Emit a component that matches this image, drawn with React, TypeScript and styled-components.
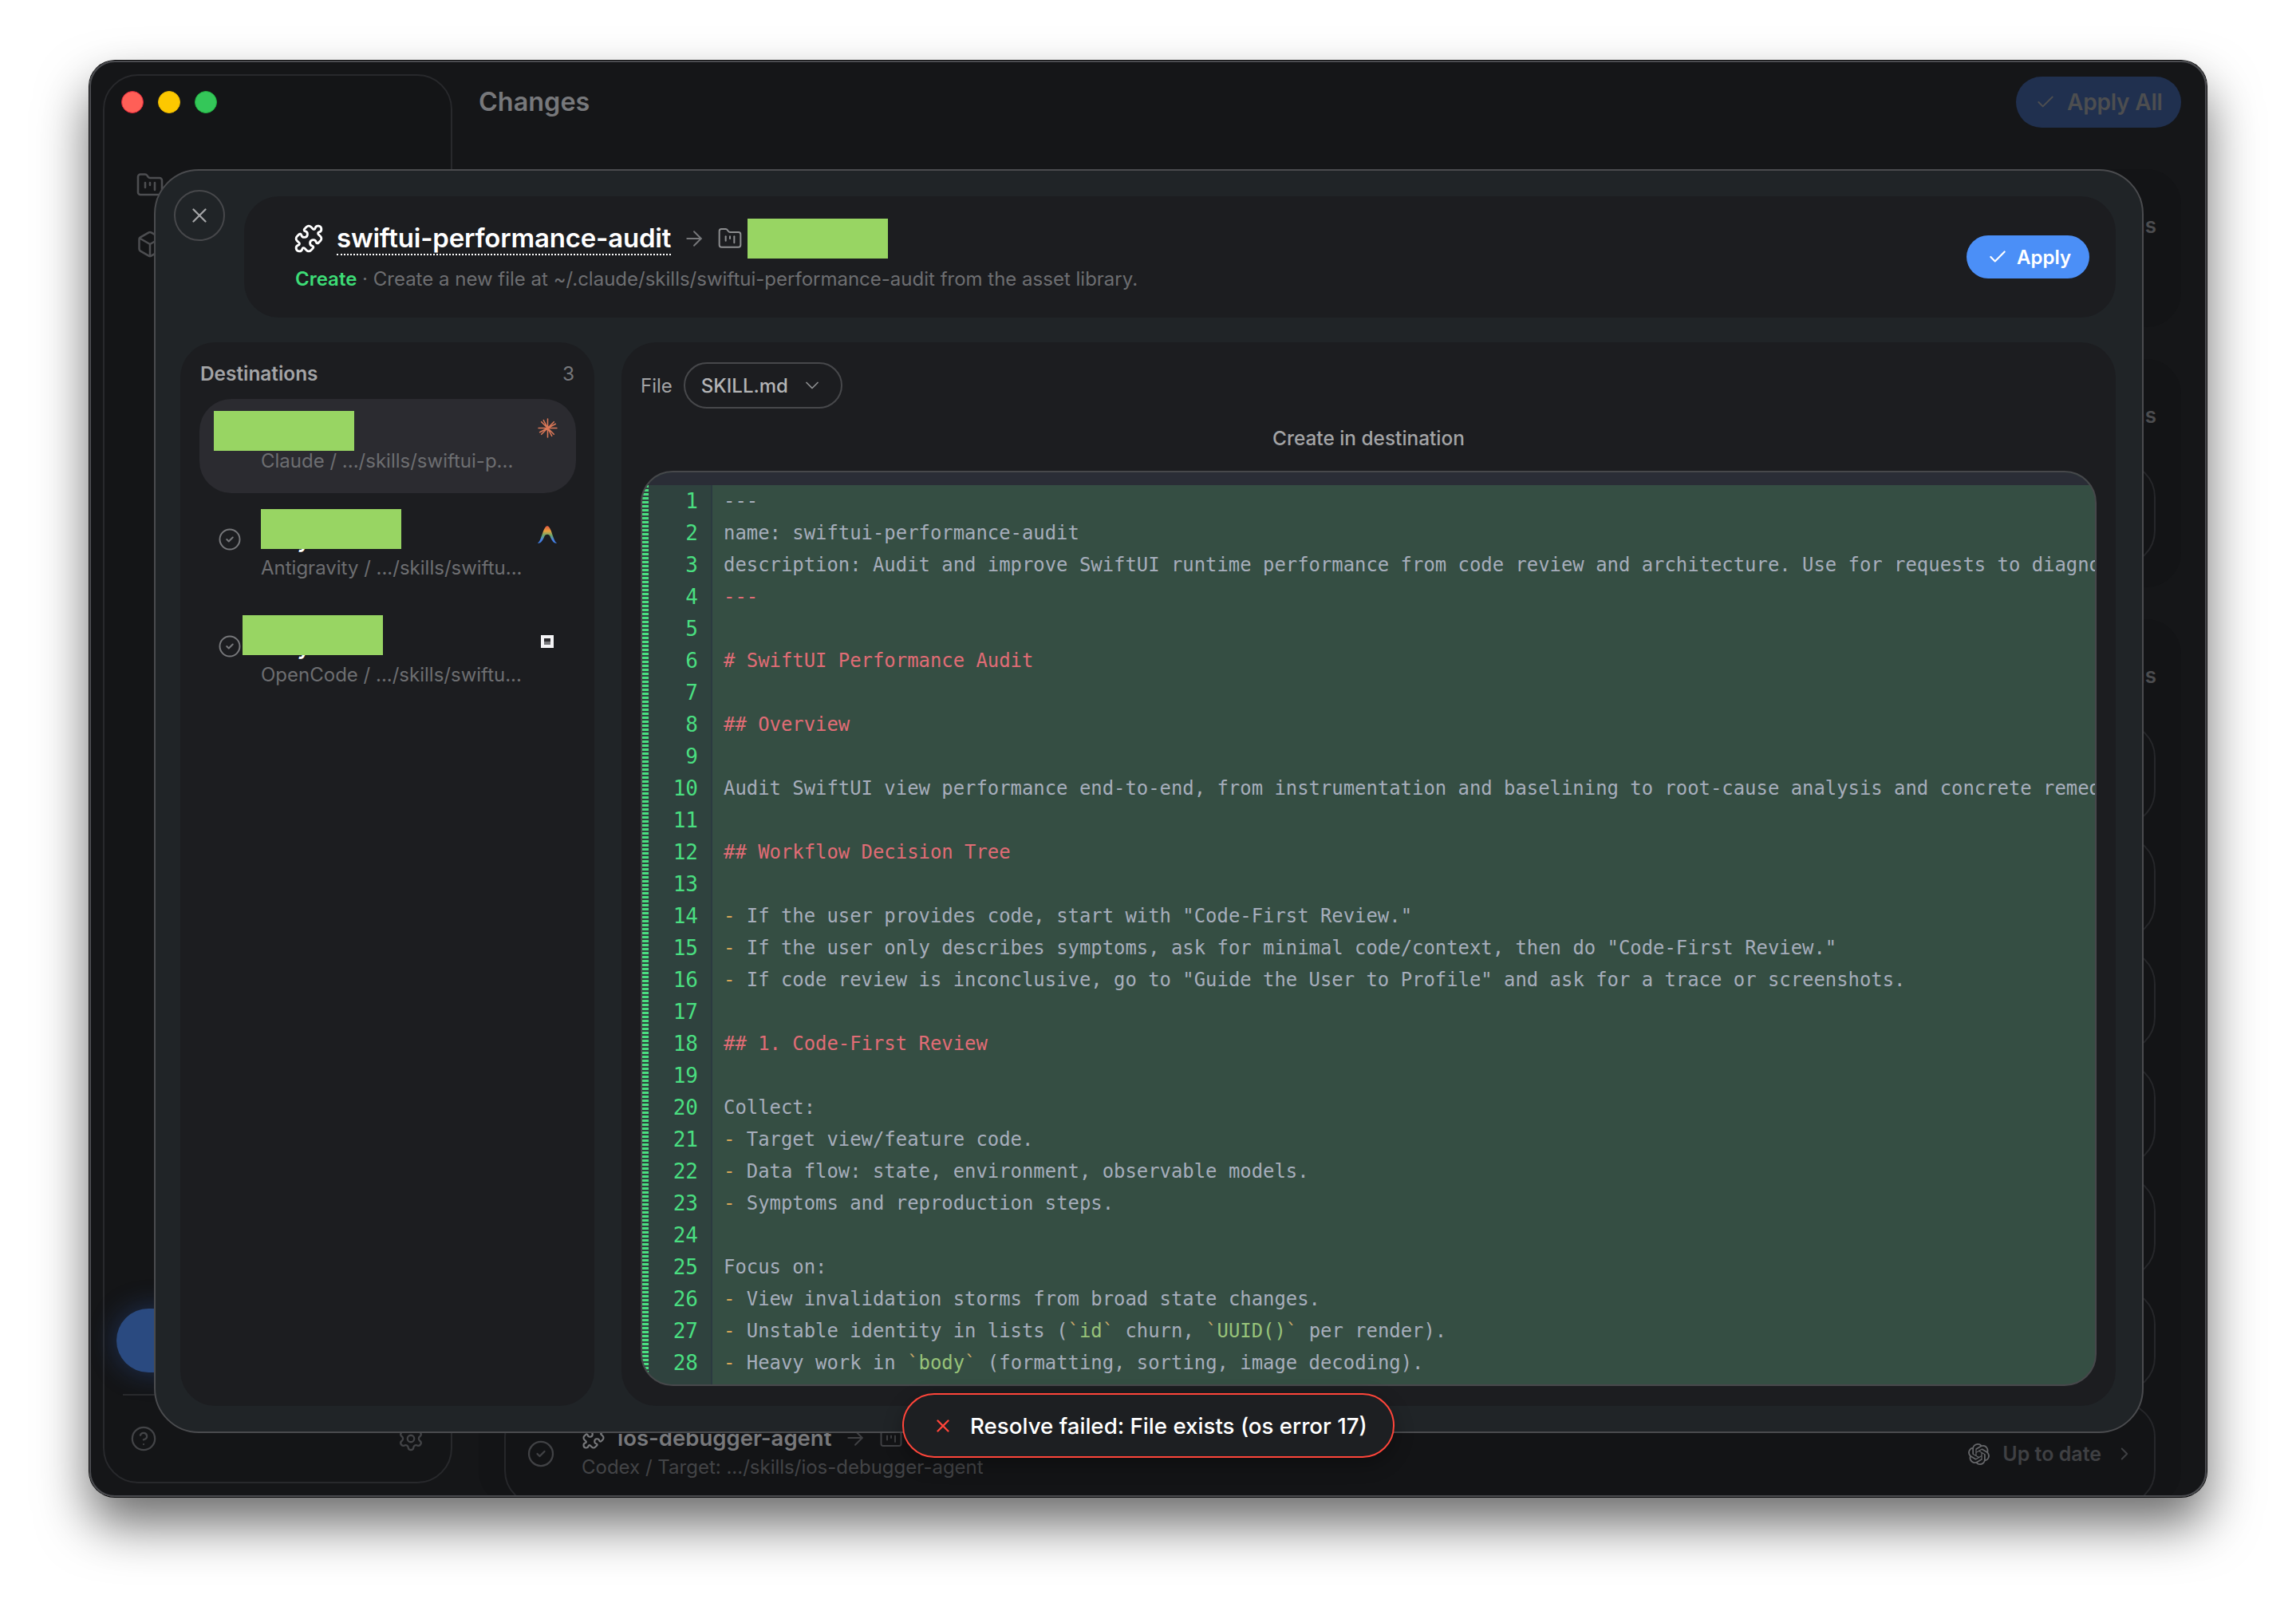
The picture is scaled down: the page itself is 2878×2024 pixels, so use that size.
import { FC, ReactNode } from 'react';
import styled, { createGlobalStyle } from 'styled-components';
import {
	ArrowRight,
	Box,
	Check,
	ChevronDown,
	ChevronRight,
	CircleCheck,
	CircleHelp,
	FolderKanban,
	Puzzle,
	Settings,
	X,
} from 'lucide-react';
import { SiOpenai } from 'react-icons/si';

const GlobalStyle = createGlobalStyle`
	html, body {
		margin: 0;
		background: #fff;
	}
	body {
		font-family: Inter, 'Liberation Sans', sans-serif;
	}
	* {
		box-sizing: border-box;
	}
`;

const Page = styled.div`
	width: 2878px;
	height: 2024px;
	padding: 76px 112px 148px;
`;

const Window = styled.div`
	position: relative;
	display: grid;
	grid-template-columns: 438px 2134px;
	column-gap: 33px;
	width: 2654px;
	height: 1800px;
	padding: 17px;
	overflow: hidden;
	border-radius: 32px;
	background: #151618;
`;

const WindowFrame = styled.div`
	width: 2654px;
	height: 1800px;
	border-radius: 32px;
	box-shadow:
		0 0 0 1px #0a0a0b,
		0 34px 64px rgba(0, 0, 0, 0.58);
`;

const WindowEdge = styled.div`
	position: absolute;
	inset: 0;
	border: 2px solid #4b4c50;
	border-radius: 32px;
	pointer-events: none;
`;

const Sidebar = styled.aside`
	display: flex;
	flex-direction: column;
	height: 1766px;
	padding: 19px 15px 0;
	border: 2px solid #28292c;
	border-radius: 44px;
	background: #141517;
`;

const Lights = styled.div`
	display: flex;
	gap: 18px;
	padding-left: 6px;
`;

const Light = styled.span<{ $color: string; $edge: string }>`
	width: 28px;
	height: 28px;
	border-radius: 50%;
	background: ${(props) => props.$color};
	border: 1px solid ${(props) => props.$edge};
`;

const Nav = styled.nav`
	display: flex;
	flex-direction: column;
	gap: 38px;
	margin-top: 72px;
	padding-left: 24px;
	color: #4d4e51;
`;

const BlueButton = styled.div`
	height: 80px;
	margin-top: auto;
	border-radius: 40px;
	background: #2a4a80;
	box-shadow: 0 0 34px rgba(52, 104, 206, 0.34);
`;

const SideDivider = styled.div`
	height: 2px;
	margin: 27px 0 0 8px;
	background: #28292c;
`;

const SideFooter = styled.div`
	display: flex;
	align-items: center;
	justify-content: space-between;
	height: 108px;
	padding: 0 18px 0 17px;
	color: #434447;
`;

const Main = styled.main`
	display: flex;
	flex-direction: column;
`;

const TopBar = styled.header`
	display: flex;
	align-items: center;
	justify-content: space-between;
	height: 64px;
	margin: 3px 0 52px;
`;

const PageTitle = styled.h1`
	margin: 0 0 2px;
	font-size: 32.400px;
	font-weight: 600;
	color: #77787b;
`;

const ApplyAll = styled.div`
	display: flex;
	align-items: center;
	gap: 14px;
	width: 207px;
	height: 64px;
	padding-left: 24px;
	border-radius: 32px;
	background: #20304f;
	color: #4d4e50;
	font-size: 28px;
	letter-spacing: -0.2px;
	font-weight: 600;
`;

const Sections = styled.div`
	display: flex;
	flex-direction: column;
	gap: 40px;
`;

const Section = styled.section<{ $height?: number }>`
	display: flex;
	flex-direction: column;
	gap: 12px;
	flex: none;
	height: ${(props) => (props.$height ? `${props.$height}px` : 'auto')};
	padding: 56px 32px 0;
	border-radius: 44px;
	background: #131416;
`;

const SectionCount = styled.div`
	height: 30px;
	margin: 0 -1px 31px 0;
	text-align: right;
	font-size: 26px;
	line-height: 30px;
	font-weight: 600;
	color: #4b4c4f;
`;

const AssetRow = styled.div`
	display: flex;
	align-items: center;
	flex: none;
	height: 130px;
	padding: 0 22px 0 26px;
	border: 2px solid #26272a;
	border-radius: 44px;
`;

const AssetCheck = styled.span`
	display: flex;
	margin-right: 33px;
	color: #414245;
`;

const AssetBody = styled.div`
	display: flex;
	flex-direction: column;
	gap: 4px;
	flex: 1;
	margin-top: -4px;
`;

const AssetTitle = styled.div`
	display: flex;
	align-items: center;
	gap: 15px;
	font-size: 27.500px;
	line-height: 34px;
	font-weight: 600;
	color: #77787b;
`;

const AssetArrow = styled.span`
	display: flex;
	color: #404144;
`;

const AssetPath = styled.div`
	font-size: 24px;
	line-height: 32px;
	color: #434447;
`;

const AssetStatus = styled.div`
	display: flex;
	align-items: center;
	gap: 16px;
	margin-right: 2px;
	font-size: 25px;
	font-weight: 600;
	color: #3f4043;
`;

const StatusLogo = styled.span`
	display: flex;
	color: #66676a;
`;

const Modal = styled.div`
	position: absolute;
	top: 136px;
	left: 81px;
	display: flex;
	flex-direction: column;
	gap: 31px;
	width: 2494px;
	height: 1584px;
	padding: 32px 33px 32px 31px;
	border: 2px solid #4a4b4e;
	border-radius: 56px;
	background: #202427;
`;

const CloseButton = styled.button`
	position: absolute;
	top: 24px;
	left: 23px;
	display: flex;
	align-items: center;
	justify-content: center;
	width: 64px;
	height: 64px;
	padding: 0;
	border: 2px solid #47484b;
	border-radius: 50%;
	background: transparent;
	color: #a5a6a8;
`;

const ModalHeader = styled.header`
	display: flex;
	align-items: center;
	justify-content: space-between;
	flex: none;
	height: 152px;
	margin-left: 80px;
	padding: 0 33px 0 64px;
	border-radius: 44px;
	background: #1c1d20;
`;

const HeaderText = styled.div`
	display: flex;
	flex-direction: column;
	gap: 10px;
	margin-top: -4px;
`;

const HeaderTitle = styled.div`
	display: flex;
	align-items: center;
	height: 50px;
	color: #a0a1a3;
`;

const HeaderIcon = styled.span`
	display: flex;
	margin: 0 16px 0 -2px;
	color: #fff;
`;

const SkillName = styled.span`
	border-bottom: 2px dotted #fff;
	font-size: 33px;
	letter-spacing: -0.2px;
	line-height: 40px;
	font-weight: 600;
	color: #fff;
`;

const HeaderArrow = styled.span`
	display: flex;
	margin: 0 14px;
	color: #77787b;
`;

const Redacted = styled.span`
	display: block;
	width: 176px;
	height: 50px;
	background: #98d563;
`;

const HeaderFolder = styled.span`
	display: flex;
	margin-right: 6px;
	color: #8d8e90;
`;

const HeaderSub = styled.div`
	font-size: 24px;
	line-height: 32px;
	color: #6d6e71;
`;

const Verb = styled.span`
	font-weight: 600;
	color: #3ddc76;
`;

const ApplyButton = styled.button`
	display: flex;
	align-items: center;
	gap: 11px;
	width: 154px;
	height: 54px;
	padding: 0 0 0 26px;
	border: 0;
	border-radius: 27px;
	background: #4b8ff7;
	color: #fff;
	font-family: inherit;
	font-size: 24px;
	font-weight: 600;
`;

const ModalBody = styled.div`
	display: grid;
	grid-template-columns: 519px 1fr;
	column-gap: 34px;
	flex: 1;
	min-height: 0;
`;

const Panel = styled.div`
	display: flex;
	flex-direction: column;
	min-width: 0;
	border-radius: 44px;
	background: #1c1d20;
`;

const DestHeader = styled.div`
	display: flex;
	align-items: center;
	justify-content: space-between;
	height: 71px;
	padding: 6px 25px 0;
	font-size: 24.400px;
	font-weight: 600;
	color: #a3a4a6;
`;

const DestCount = styled.span`
	font-weight: 400;
	color: #77787b;
`;

const DestList = styled.div`
	display: flex;
	flex-direction: column;
	gap: 16px;
	padding: 0 23px 0 24px;
`;

const DestRow = styled.div<{ $active?: boolean }>`
	display: flex;
	height: 118px;
	padding: 0 22px 0 23px;
	border-radius: 40px;
	background: ${(props) => (props.$active ? '#2b2b30' : 'transparent')};
`;

const DestCheck = styled.span`
	display: flex;
	margin: 27px 24px 0 0;
	color: #77787b;
`;

const DestText = styled.div`
	position: relative;
	flex: 1;
	min-width: 0;
	padding-top: 26px;
`;

const DestName = styled.div`
	font-size: 27px;
	line-height: 34px;
	font-weight: 600;
	color: #fff;
`;

const DestPath = styled.div`
	margin-top: 2px;
	font-size: 24px;
	line-height: 32px;
	color: #6d6e71;
`;

const DestRedaction = styled(Redacted)<{ $left: number; $top: number }>`
	position: absolute;
	top: ${(props) => props.$top}px;
	left: ${(props) => props.$left}px;
`;

const DestLogo = styled.span`
	display: flex;
	align-items: center;
	justify-content: center;
	width: 28px;
	height: 28px;
	margin-top: 22px;
`;

const FileBar = styled.div`
	display: flex;
	align-items: center;
	gap: 14px;
	height: 58px;
	margin: 25px 24px 0;
	font-size: 24px;
	color: #a3a4a6;
`;

const FileSelect = styled.div`
	display: flex;
	align-items: center;
	width: 199px;
	height: 58px;
	padding-left: 20px;
	gap: 16px;
	border: 2px solid #47484b;
	border-radius: 29px;
	color: #b4b5b7;
	font-weight: 500;
`;

const DiffTitle = styled.div`
	height: 78px;
	text-align: center;
	font-size: 24.400px;
	font-weight: 500;
	line-height: 74px;
	color: #a3a4a6;
`;

const CodeBlock = styled.div`
	display: flex;
	flex-direction: column;
	flex: none;
	width: 1825px;
	height: 1147px;
	margin-left: 24px;
	overflow: hidden;
	border: 2px solid #47484b;
	border-radius: 40px;
	background: #354e43;
`;

const CodeTopBand = styled.div`
	flex: none;
	height: 16px;
	background: #2a2d36;
`;

const CodeBody = styled.div`
	display: flex;
	flex: 1;
	min-height: 0;
	font-family: 'DejaVu Sans Mono', 'Liberation Mono', monospace;
	font-size: 23.900px;
	line-height: 40px;
`;

const AddedStrip = styled.div`
	flex: none;
	width: 8px;
	background: repeating-linear-gradient(to bottom, #4ade80 0 3px, #2f423e 3px 5px);
`;

const Gutter = styled.div`
	flex: none;
	width: 80px;
	padding-right: 16px;
	border-right: 2px solid #2b3a40;
	background: #2f423e;
	text-align: right;
	font-size: 26px;
	color: #4ade80;
`;

const CodeLines = styled.div`
	flex: 1;
	min-width: 0;
	padding-left: 14px;
	overflow: hidden;
	white-space: pre;
	color: #a6adbb;
`;

const Line = styled.div`
	height: 40px;
`;

const Heading = styled.span`
	color: #e06c75;
`;

const Bullet = styled.span`
	color: #d8a657;
`;

const InlineCode = styled.span`
	color: #98c379;
`;

const Tick = styled.span`
	color: #c8a869;
`;

const Toast = styled.div`
	position: absolute;
	bottom: 49px;
	left: 1019px;
	display: flex;
	align-items: center;
	gap: 21px;
	width: 617px;
	height: 81px;
	padding-left: 36px;
	border: 2px solid #ff453a;
	border-radius: 40px;
	background: #1d1f22;
	box-shadow: 0 8px 24px rgba(0, 0, 0, 0.3);
	color: #fff;
	font-size: 27.700px;
	font-weight: 500;
`;

const ToastIcon = styled.span`
	display: flex;
	color: #ff453a;
`;

const ClaudeMark: FC = () => (
	<svg width="25" height="25" viewBox="0 0 24 24" fill="none" stroke="#d97757" strokeWidth="1.5" strokeLinecap="round">
		<path d="M12 12 12 1M12 12 12 23M12 12 1 12M12 12 23 12M12 12 4.500 4.500M12 12 19.500 19.500M12 12 19.500 4.500M12 12 4.500 19.500M12 12 7 2.500M12 12 17 21.500M12 12 2.500 17M12 12 21.500 7" />
	</svg>
);

const AntigravityMark: FC = () => (
	<svg width="26" height="24" viewBox="0 0 26 24">
		<defs>
			<linearGradient id="antigravity" x1="0" y1="0" x2="0" y2="1">
				<stop offset="0" stopColor="#e2533f" />
				<stop offset="0.3" stopColor="#e8a13f" />
				<stop offset="0.55" stopColor="#6aa86a" />
				<stop offset="0.8" stopColor="#4a82e6" />
				<stop offset="1" stopColor="#3d7be0" />
			</linearGradient>
		</defs>
		<path
			d="M1 22.500C6 20 7.500 2 13 1C18.500 2 20 20 25 22.500C21.500 24 18.500 19 16.500 14C15 11 11 11 9.500 14C7.500 19 4.500 24 1 22.500Z"
			fill="url(#antigravity)"
		/>
	</svg>
);

const OpenCodeBox = styled.span`
	display: flex;
	flex-direction: column;
	width: 16px;
	height: 16px;
	padding: 4px;
	background: #f4f4f6;
`;

const OpenCodeTop = styled.span`
	flex: 1;
	background: #2b2b2e;
`;

const OpenCodeBottom = styled.span`
	flex: 1;
	background: #77787b;
`;

const OpenCodeMark: FC = () => (
	<OpenCodeBox>
		<OpenCodeTop />
		<OpenCodeBottom />
	</OpenCodeBox>
);

interface IDestination {
	path: string;
	logo: ReactNode;
	redactLeft: number;
	redactTop: number;
	active?: boolean;
}

const destinations: IDestination[] = [
	{ path: 'Claude / .../skills/swiftui-p...', logo: <ClaudeMark />, redactLeft: -59, redactTop: 15, active: true },
	{ path: 'Antigravity / .../skills/swiftu...', logo: <AntigravityMark />, redactLeft: 0, redactTop: 4 },
	{ path: 'OpenCode / .../skills/swiftu...', logo: <OpenCodeMark />, redactLeft: -23, redactTop: 3 },
];

const code: ReactNode[] = [
	'---',
	'name: swiftui-performance-audit',
	'description: Audit and improve SwiftUI runtime performance from code review and architecture. Use for requests to diagnose slow rendering.',
	<Heading>---</Heading>,
	'',
	<Heading># SwiftUI Performance Audit</Heading>,
	'',
	<Heading>## Overview</Heading>,
	'',
	'Audit SwiftUI view performance end-to-end, from instrumentation and baselining to root-cause analysis and concrete remediation steps.',
	'',
	<Heading>## Workflow Decision Tree</Heading>,
	'',
	<><Bullet>-</Bullet> If the user provides code, start with "Code-First Review."</>,
	<><Bullet>-</Bullet> If the user only describes symptoms, ask for minimal code/context, then do "Code-First Review."</>,
	<><Bullet>-</Bullet> If code review is inconclusive, go to "Guide the User to Profile" and ask for a trace or screenshots.</>,
	'',
	<Heading>## 1. Code-First Review</Heading>,
	'',
	'Collect:',
	<><Bullet>-</Bullet> Target view/feature code.</>,
	<><Bullet>-</Bullet> Data flow: state, environment, observable models.</>,
	<><Bullet>-</Bullet> Symptoms and reproduction steps.</>,
	'',
	'Focus on:',
	<><Bullet>-</Bullet> View invalidation storms from broad state changes.</>,
	<><Bullet>-</Bullet> Unstable identity in lists (<Tick>`</Tick><InlineCode>id</InlineCode><Tick>`</Tick> churn, <Tick>`</Tick><InlineCode>UUID()</InlineCode><Tick>`</Tick> per render).</>,
	<><Bullet>-</Bullet> Heavy work in <Tick>`</Tick><InlineCode>body</InlineCode><Tick>`</Tick> (formatting, sorting, image decoding).</>,
];

const App: FC = () => (
	<Page>
		<GlobalStyle />
		<WindowFrame>
			<Window>
				<Sidebar>
					<Lights>
						<Light $color="#ff5f57" $edge="#e0263a" />
						<Light $color="#fdc800" $edge="#e6b400" />
						<Light $color="#34c759" $edge="#1fae3f" />
					</Lights>
					<Nav>
						<FolderKanban size={36} strokeWidth={1.7} />
						<Box size={36} strokeWidth={1.7} />
					</Nav>
					<BlueButton />
					<SideDivider />
					<SideFooter>
						<CircleHelp size={34} strokeWidth={1.6} />
						<Settings size={34} strokeWidth={1.6} />
					</SideFooter>
				</Sidebar>

				<Main>
					<TopBar>
						<PageTitle>Changes</PageTitle>
						<ApplyAll>
							<Check size={26} strokeWidth={1.8} />
							Apply All
						</ApplyAll>
					</TopBar>
					<Sections>
						<Section $height={198}>
							<SectionCount>4 destinations</SectionCount>
						</Section>
						<Section $height={286}>
							<SectionCount>2 destinations</SectionCount>
							<AssetRow />
						</Section>
						<Section>
							<SectionCount>7 destinations</SectionCount>
							{[0, 1, 2, 3, 4, 5].map((row) => (
								<AssetRow key={row} />
							))}
							<AssetRow>
								<AssetCheck>
									<CircleCheck size={36} strokeWidth={1.5} />
								</AssetCheck>
								<AssetBody>
									<AssetTitle>
										<Puzzle size={30} strokeWidth={1.7} />
										ios-debugger-agent
										<AssetArrow>
											<ArrowRight size={30} strokeWidth={1.5} />
										</AssetArrow>
										<FolderKanban size={30} strokeWidth={1.5} color="#404144" />
									</AssetTitle>
									<AssetPath>Codex / Target: .../skills/ios-debugger-agent</AssetPath>
								</AssetBody>
								<AssetStatus>
									<StatusLogo>
										<SiOpenai size={27} />
									</StatusLogo>
									Up to date
									<ChevronRight size={26} strokeWidth={1.8} />
								</AssetStatus>
							</AssetRow>
						</Section>
					</Sections>
				</Main>

				<Modal>
					<CloseButton>
						<X size={30} strokeWidth={1.8} />
					</CloseButton>
					<ModalHeader>
						<HeaderText>
							<HeaderTitle>
								<HeaderIcon>
									<Puzzle size={38} strokeWidth={1.8} />
								</HeaderIcon>
								<SkillName>swiftui-performance-audit</SkillName>
								<HeaderArrow>
									<ArrowRight size={30} strokeWidth={1.5} />
								</HeaderArrow>
								<HeaderFolder>
									<FolderKanban size={32} strokeWidth={1.5} />
								</HeaderFolder>
								<Redacted />
							</HeaderTitle>
							<HeaderSub>
								<Verb>Create</Verb> · Create a new file at ~/.claude/skills/swiftui-performance-audit from the asset library.
							</HeaderSub>
						</HeaderText>
						<ApplyButton>
							<Check size={26} strokeWidth={2} />
							Apply
						</ApplyButton>
					</ModalHeader>
					<ModalBody>
						<Panel>
							<DestHeader>
								Destinations
								<DestCount>3</DestCount>
							</DestHeader>
							<DestList>
								{destinations.map((dest) => (
									<DestRow key={dest.path} $active={dest.active}>
										<DestCheck>
											<CircleCheck size={30} strokeWidth={1.6} />
										</DestCheck>
										<DestText>
											<DestName>Gray</DestName>
											<DestPath>{dest.path}</DestPath>
											<DestRedaction $left={dest.redactLeft} $top={dest.redactTop} />
										</DestText>
										<DestLogo>{dest.logo}</DestLogo>
									</DestRow>
								))}
							</DestList>
						</Panel>
						<Panel>
							<FileBar>
								File
								<FileSelect>
									SKILL.md
									<ChevronDown size={28} strokeWidth={1.5} color="#8d8e90" />
								</FileSelect>
							</FileBar>
							<DiffTitle>Create in destination</DiffTitle>
							<CodeBlock>
								<CodeTopBand />
								<CodeBody>
									<AddedStrip />
									<Gutter>
										{code.map((_, index) => (
											<Line key={index}>{index + 1}</Line>
										))}
									</Gutter>
									<CodeLines>
										{code.map((line, index) => (
											<Line key={index}>{line}</Line>
										))}
									</CodeLines>
								</CodeBody>
							</CodeBlock>
						</Panel>
					</ModalBody>
				</Modal>

				<Toast>
					<ToastIcon>
						<X size={26} strokeWidth={2.2} />
					</ToastIcon>
					Resolve failed: File exists (os error 17)
				</Toast>
				<WindowEdge />
			</Window>
		</WindowFrame>
	</Page>
);

export default App;
